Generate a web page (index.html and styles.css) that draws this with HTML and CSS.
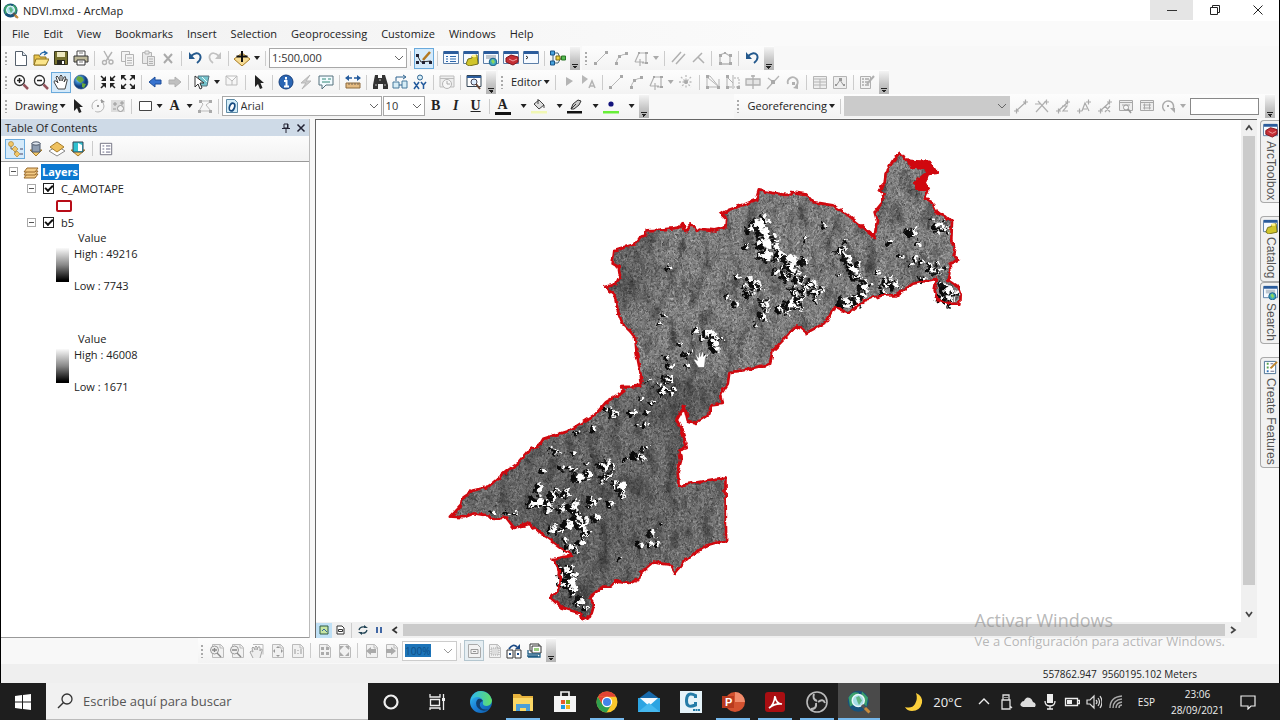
FILE: index.html
```html
<!DOCTYPE html>
<html lang="es">
<head>
<meta charset="utf-8">
<meta name="viewport" content="width=device-width, initial-scale=1">
<title>NDVI.mxd - ArcMap</title>
<link rel="stylesheet" href="styles.css">
</head>
<body>
<svg class="defs" aria-hidden="true">
  <defs>
    <linearGradient id="g-edge" x1="0" y1="0" x2="1" y2="1"><stop offset="0" stop-color="#36c6f4"/><stop offset=".5" stop-color="#1b7fd6"/><stop offset="1" stop-color="#0c59a4"/></linearGradient>
    <linearGradient id="g-edge2" x1="0" y1="0" x2="1" y2="0"><stop offset="0" stop-color="#2fb8ee"/><stop offset="1" stop-color="#62e066"/></linearGradient>
    <radialGradient id="g-globe" cx=".35" cy=".3"><stop offset="0" stop-color="#d8efff"/><stop offset=".5" stop-color="#3d8bd0"/><stop offset="1" stop-color="#123f80"/></radialGradient>
  </defs>
  <symbol id="app" viewBox="0 0 16 16"><circle cx="7.500" cy="7.500" r="7" fill="#17527c"/><path d="M1 5q3-5 7-3l-2 3-2 5-2 1zM10 1l4 4-1 6-4-4z" fill="#3ca06c"/><circle cx="7.500" cy="7" r="4" fill="#a5dbe8" stroke="#eaf8fb"/><path d="M6 5l2-1 2 3-2 3-1-2z" fill="#5fb583"/><path d="M10 10l4 4.500" stroke="#555" stroke-width="2"/><path d="M12 12l3 3" stroke="#c98c3c" stroke-width="2"/></symbol>
  <symbol id="new" viewBox="0 0 16 16"><path d="M2.500 1.500h7l4 4v10h-11z" fill="#fff" stroke="#55606c"/><path d="M9.500 1.500v4h4" fill="#dfe6ee" stroke="#55606c"/></symbol>
  <symbol id="open" viewBox="0 0 16 16"><path d="M1 5h5l1 2h6v8H1z" fill="#e9c44c" stroke="#8f7420"/><path d="M3 9h13l-3 6H1z" fill="#fbe58a" stroke="#8f7420"/><path d="M7 5q2-4 6-2M11 1l3 2-3 2" fill="none" stroke="#276aa8" stroke-width="1.300"/></symbol>
  <symbol id="save" viewBox="0 0 16 16"><path d="M1.500 1.500h13v13h-13z" fill="#77722f" stroke="#38371c"/><path d="M4 2h8v5H4z" fill="#eee9c0"/><path d="M4 10h8v5H4z" fill="#282820"/><path d="M9 11h2v3H9z" fill="#fff"/></symbol>
  <symbol id="print" viewBox="0 0 16 16"><path d="M4 6V1h8v5" fill="#fff" stroke="#444"/><path d="M1 6h14v6H1z" fill="#bdb89a" stroke="#333"/><path d="M4 10h8v5H4z" fill="#fff" stroke="#333"/><path d="M6 3h4M6 12h4" stroke="#777"/></symbol>
  <symbol id="cut" viewBox="0 0 16 16"><g fill="none" stroke="#b3b3b3" stroke-width="1.400"><path d="M4 1l5 9M12 2L6 11"/><circle cx="4.500" cy="12.500" r="2"/><circle cx="11" cy="12" r="2"/></g></symbol>
  <symbol id="copy" viewBox="0 0 16 16"><g fill="#f4f4f4" stroke="#b3b3b3"><path d="M1.500 1.500h8v10h-8z"/><path d="M5.500 4.500h8v11h-8z"/><path d="M7 8h5M7 10.500h5M7 13h5"/></g></symbol>
  <symbol id="paste" viewBox="0 0 16 16"><g fill="#e9e9e9" stroke="#b3b3b3"><path d="M2.500 2.500h9v11h-9z"/><path d="M5 1h4v3H5z"/><path d="M7.500 6.500h7v9h-7z"/><path d="M9 9h4M9 11.500h4M9 13.500h4"/></g></symbol>
  <symbol id="del" viewBox="0 0 16 16"><path d="M4 4l8 9M12 4l-8 9" stroke="#aaa" stroke-width="2"/></symbol>
  <symbol id="undo" viewBox="0 0 16 16"><path d="M4 6q6-5 9-1 2 4-3 8" fill="none" stroke="#24598d" stroke-width="1.900"/><path d="M2 2v7h6z" fill="#24598d"/></symbol>
  <symbol id="redo" viewBox="0 0 16 16"><path d="M12 6q-6-5-9-1-2 4 3 8" fill="none" stroke="#c2c2c2" stroke-width="1.700"/><path d="M14 2v7H8z" fill="#c2c2c2"/></symbol>
  <symbol id="add" viewBox="0 0 16 16"><path d="M8 3l8 6-8 7-8-7z" fill="#f7dc94" stroke="#a77b22"/><path d="M8 1v11M2.500 6.500h11" stroke="#111" stroke-width="2"/></symbol>
  <symbol id="edit" viewBox="0 0 16 16"><path d="M1 5l4 7 10-1" fill="none" stroke="#333"/><path d="M0 4h3v3H0zM0 11h3v3H0zM6 11h3v3H6zM13 11h3v3h-3z" fill="#223"/><path d="M7 10l7-8" stroke="#b37820" stroke-width="2.500"/></symbol>
  <symbol id="win" viewBox="0 0 16 16"><path d="M.5 1.500h15v12H.5z" fill="#f6faff" stroke="#5c7fa8"/><path d="M1 1h14v3H1z" fill="#2b5c9c"/></symbol>
  <symbol id="toc" viewBox="0 0 16 16"><use href="#win"/><path d="M3 6.500h2M3 9h2M3 11.500h2M7 6.500h6M7 9h6M7 11.500h6" stroke="#2d68ad"/></symbol>
  <symbol id="cat" viewBox="0 0 16 16"><use href="#win"/><path d="M5 9l4-1V6l5-1 1 9-9 2-3-2z" fill="#d0c52b" stroke="#77721a"/><ellipse cx="11" cy="6" rx="2.500" ry="1.300" fill="#fff28a"/></symbol>
  <symbol id="sea" viewBox="0 0 16 16"><use href="#win"/><path d="M3 5h10v4H3z" fill="#bdc6cf"/><circle cx="10" cy="12" r="3.800" fill="#3fa6bd" stroke="#1d628c"/><path d="M8 11l2-2 2 3-2 2z" fill="#8bd75c"/></symbol>
  <symbol id="tbx" viewBox="0 0 16 16"><use href="#win"/><path d="M3 8l5-3 7 2v5l-5 3-7-3z" fill="#c52e35" stroke="#80151c"/><path d="M6 9l4 2 4-2" fill="none" stroke="#f0a0a0"/></symbol>
  <symbol id="py" viewBox="0 0 16 16"><use href="#win"/><path d="M3 6l2 1.500L3 9" fill="none" stroke="#222"/></symbol>
  <symbol id="mb" viewBox="0 0 16 16"><path d="M3 4v9M5 3h3l2 5M4 13h4l3-5" fill="none" stroke="#467"/><path d="M.5 1h4v4h-4zM.5 11h4v4h-4z" fill="#47a1dc" stroke="#1b5688"/><path d="M6 6h4v4H6z" fill="#ecd33e" stroke="#7c6b10"/><path d="M11.500 6h4v4h-4z" fill="#57bb51" stroke="#297424"/></symbol>
  <symbol id="line" viewBox="0 0 16 16"><path d="M3 13L13 3" stroke="#b8b8b8"/><path d="M1 12h3v3H1zM12 1h3v3h-3z" fill="#a8a8a8"/></symbol>
  <symbol id="arc" viewBox="0 0 16 16"><path d="M3 14q1-9 10-10" fill="none" stroke="#b8b8b8"/><path d="M2 12h3v3H2zM5 5h3v3H5zM12 2h3v3h-3z" fill="#a8a8a8"/></symbol>
  <symbol id="trace" viewBox="0 0 16 16"><path d="M2 12l4-9h7v10H9M2 12h4M7 9v7M4 12h7" fill="none" stroke="#b0b0b0" stroke-width="1.200"/><path d="M5 2h2v2H5zM12 2h3v2h-3zM12 12h3v2h-3z" fill="#a6a6a6"/></symbol>
  <symbol id="par" viewBox="0 0 16 16"><path d="M2 12L11 2M6 14L15 4" stroke="#b0b0b0" stroke-width="1.500"/></symbol>
  <symbol id="perp" viewBox="0 0 16 16"><path d="M3 12L12 3M8 7l6 6" stroke="#b0b0b0" stroke-width="1.500"/></symbol>
  <symbol id="poly" viewBox="0 0 16 16"><path d="M3 5l5-2 5 3v8H3z" fill="none" stroke="#b5b5b5" stroke-width="1.300"/><path d="M2 4h3v3H2zM7 2h2v2H7zM12 4h3v3h-3zM12 12h3v3h-3zM2 12h3v3H2z" fill="#a9a9a9"/></symbol>
  <symbol id="zin" viewBox="0 0 16 16"><circle cx="6.500" cy="6.500" r="5" fill="#fff" stroke="#333" stroke-width="1.300"/><path d="M4 6.500h5M6.500 4v5" stroke="#222" stroke-width="1.500"/><path d="M10.500 10.500l4.500 4.500" stroke="#94535b" stroke-width="2.500"/></symbol>
  <symbol id="zout" viewBox="0 0 16 16"><circle cx="6.500" cy="6.500" r="5" fill="#fff" stroke="#333" stroke-width="1.300"/><path d="M4 6.500h5" stroke="#222" stroke-width="1.500"/><path d="M10.500 10.500l4.500 4.500" stroke="#94535b" stroke-width="2.500"/></symbol>
  <symbol id="hand" viewBox="0 0 16 16"><path d="M5 15L1 8q0-2 2-1l2 2L3 3q1-2 2 0l2 4V2q1-2 2 0v5l2-4q2-1 1.500 1L11 8l2-3q2 0 1 2l-2 8z" fill="#fff" stroke="#444"/></symbol>
  <symbol id="globe" viewBox="0 0 16 16"><circle cx="8" cy="8" r="7" fill="url(#g-globe)" stroke="#1c477c" stroke-width=".6"/><path d="M5 2l4 1 2 3-3 3-2-1-3-3zM9 9l4 1-2 4-2-1z" fill="#69a93e"/></symbol>
  <symbol id="fin" viewBox="0 0 16 16"><g stroke="#222" stroke-width="1.500"><path d="M1 2l4 4M15 2l-4 4M1 14l4-4M15 14l-4-4"/></g><path d="M6 2v5H1zM10 2v5h5zM6 14V9H1zM10 14V9h5z" fill="#222"/></symbol>
  <symbol id="fout" viewBox="0 0 16 16"><g stroke="#222" stroke-width="1.500"><path d="M2 2l4 4M14 2l-4 4M2 14l4-4M14 14l-4-4"/></g><path d="M1 1h5L1 6zM15 1h-5l5 5zM1 15h5l-5-5zM15 15h-5l5-5z" fill="#222"/></symbol>
  <symbol id="left" viewBox="0 0 16 16"><path d="M2 8l6-5v3h6v4H8v3z" fill="#3773cf" stroke="#1d4d98"/></symbol>
  <symbol id="right" viewBox="0 0 16 16"><path d="M14 8L8 3v3H2v4h6v3z" fill="#c0c0c0" stroke="#b0b0b0"/></symbol>
  <symbol id="self" viewBox="0 0 16 16"><path d="M4 2h11l-2 10H6z" fill="#74c3cc" stroke="#54707c"/><path d="M8 3l5 5" stroke="#e9f9fa"/><path d="M1 2v11l3-3 2 5 2-1-2-5h4z" fill="#fff" stroke="#333"/></symbol>
  <symbol id="clr" viewBox="0 0 16 16"><path d="M2 2h11v9H2zM2 2l6 5 5-5M8 7v4" fill="#f6f6f6" stroke="#bbb"/></symbol>
  <symbol id="ptr" viewBox="0 0 16 16"><path d="M4 1v12l3-3 2 5 2.500-1-2-5H13z" fill="#222"/></symbol>
  <symbol id="info" viewBox="0 0 16 16"><circle cx="8" cy="8" r="7" fill="#2a66b4" stroke="#173f7c"/><path d="M8 3v2.500M6 7h2.500v5M6 12.500h5" stroke="#fff" stroke-width="2" fill="none"/></symbol>
  <symbol id="bolt" viewBox="0 0 16 16"><path d="M12 1L3 9h5l-4 6 9-8H8z" fill="#ccc" stroke="#b7b7b7"/></symbol>
  <symbol id="html" viewBox="0 0 16 16"><path d="M1 2h14v9H8l-4 4v-4H1z" fill="#f2fbff" stroke="#54707c"/><path d="M4 5h4M4 8h8M10 5h3" stroke="#387"/></symbol>
  <symbol id="meas" viewBox="0 0 16 16"><path d="M1 9h14v5H1z" fill="#e4bb82" stroke="#8d6a3c"/><path d="M4 9v2M7 9v2M10 9v2M13 9v2" stroke="#765"/><path d="M3 4h4M9 4h4" stroke="#245b9d" stroke-width="1.500"/><path d="M4 1v6L0 4zM12 1v6l4-3z" fill="#245b9d"/></symbol>
  <symbol id="bino" viewBox="0 0 16 16"><path d="M3 1h3v3h4V1h3l3 10v4h-5v-5H6v5H1v-4z" fill="#333"/><path d="M3 11h2M12 11h2M7 6h2" stroke="#bbb"/></symbol>
  <symbol id="route" viewBox="0 0 16 16"><path d="M1 8h6v6H1zM10 7h5v7h-5z" fill="#d7edf6" stroke="#47789b"/><path d="M4 7V3h9M11 1l3 2-3 2M7 11h3" fill="none" stroke="#2d6390"/></symbol>
  <symbol id="xy" viewBox="0 0 16 16"><circle cx="8" cy="3.500" r="2.500" fill="#d7edf6" stroke="#2d6390"/><path d="M2 8l5 7M7 8l-5 7M9 8l2.500 3L14 8M11.500 11v4" fill="none" stroke="#245b9d" stroke-width="1.500"/></symbol>
  <symbol id="time" viewBox="0 0 16 16"><path d="M1 2h14v11H1zM1 4.500h14" fill="#eee" stroke="#bdbdbd"/><circle cx="8" cy="10" r="4.500" fill="#f7f7f7" stroke="#b5b5b5"/><path d="M8 7v3h3" stroke="#aaa" fill="none"/></symbol>
  <symbol id="view" viewBox="0 0 16 16"><path d="M1 1.500h14v11H1z" fill="#fff" stroke="#345"/><path d="M1 3h14" stroke="#2b5c9c" stroke-width="2"/><circle cx="8" cy="8" r="3" fill="#def" stroke="#445"/><path d="M10 10l4 5" stroke="#643" stroke-width="2"/></symbol>
  <symbol id="gview" viewBox="0 0 16 16"><path d="M1.500 2.500h13v10h-13zM2 4.500h12" fill="#eee" stroke="#a8a8a8"/><path d="M4 7h8" stroke="#aaa"/><circle cx="8" cy="9.500" r="2.500" fill="#f7f7f7" stroke="#999"/><path d="M10 11l3 4" stroke="#999" stroke-width="1.500"/></symbol>
  <symbol id="glink" viewBox="0 0 16 16"><path d="M1.500 2.500h13v10h-13zM2 4.500h12" fill="#eee" stroke="#a8a8a8"/><path d="M4 7h8M4 10h8M5.500 5.500v6M10.500 5.500v6" stroke="#aaa"/></symbol>
  <symbol id="gptr" viewBox="0 0 16 16"><path d="M5 3v9l7-5z" fill="#b4b4b4"/></symbol>
  <symbol id="aptr" viewBox="0 0 16 16"><path d="M1 1v9l6-5z" fill="#b8b8b8"/><path d="M8 14l3-7 3 7M9 12h4" stroke="#b4b4b4" stroke-width="1.500" fill="none"/></symbol>
  <symbol id="burst" viewBox="0 0 16 16"><path d="M8 1v14M1 8h14M3 3l10 10M13 3L3 13" stroke="#bbb" stroke-dasharray="2 1.500" stroke-width="1.300"/><circle cx="8" cy="8" r="2" fill="#aaa"/></symbol>
  <symbol id="cutp" viewBox="0 0 16 16"><path d="M2 2h3l9 11v-8M2 2v11h12M2 3l12 10" fill="none" stroke="#b5b5b5"/><path d="M1 1h3v3H1zM1 12h3v3H1zM12 12h3v3h-3z" fill="#a9a9a9"/></symbol>
  <symbol id="split" viewBox="0 0 16 16"><path d="M2 2v11h5M2 3l6 6M8 1v14" fill="none" stroke="#b0b0b0"/><path d="M9 4h5v9H9" fill="none" stroke="#b0b0b0" stroke-dasharray="2 1"/><path d="M1 1h3v3H1zM1 12h3v3H1zM12 12h3v3h-3z" fill="#aaa"/></symbol>
  <symbol id="cross" viewBox="0 0 16 16"><path d="M1 5h14v6H1zM8 1v14M6 2h4" fill="#e4e4e4" stroke="#b0b0b0" stroke-width="1.300"/></symbol>
  <symbol id="slash" viewBox="0 0 16 16"><path d="M2 15L14 2M3 4l4 3" stroke="#b5b5b5" stroke-width="1.300"/><path d="M6 6h4v4H6z" fill="#aaa"/></symbol>
  <symbol id="rot" viewBox="0 0 16 16"><path d="M3 10A5 5 0 1 1 11 12" fill="none" stroke="#b5b5b5" stroke-width="2"/><path d="M7 8h3v3H7zM8 14l5-4v5z" fill="#b0b0b0"/></symbol>
  <symbol id="table" viewBox="0 0 16 16"><path d="M1.500 2.500h13v12h-13zM2 5h12M2 8h12M2 11h12M8 5v9" fill="#eee" stroke="#b5b5b5"/></symbol>
  <symbol id="sketch" viewBox="0 0 16 16"><path d="M1.500 2.500h13v12h-13z" fill="#eee" stroke="#b5b5b5"/><path d="M4 12l4-6 4 6" fill="none" stroke="#999"/><path d="M7 4h3v3H7zM3 10h2v2H3zM11 10h2v2h-2z" fill="#999"/></symbol>
  <symbol id="create" viewBox="0 0 16 16"><path d="M1.500 2.500h10v12h-10z" fill="#f2f2f2" stroke="#b0b0b0"/><path d="M3 5h2M3 8h2M3 11h2M6 5h4M6 8h3M6 11h4" stroke="#aaa" stroke-width="1.400"/><path d="M8 10l7-8" stroke="#b0b0b0" stroke-width="2"/></symbol>
  <symbol id="createc" viewBox="0 0 16 16"><path d="M1.500 1.500h12v13h-12z" fill="#fff" stroke="#4a7194"/><path d="M4 4h2M4 8h2" stroke="#57a34b" stroke-width="2"/><path d="M4 12h2" stroke="#2d6fb8" stroke-width="2"/><path d="M8 4h3M8 8h2M8 12h4" stroke="#668"/><path d="M8 9l7-7" stroke="#be8630" stroke-width="2"/></symbol>
  <symbol id="rotc" viewBox="0 0 16 16"><circle cx="8" cy="8" r="6" fill="none" stroke="#b5b5b5" stroke-dasharray="12 3"/><path d="M7 7h2v2H7zM11 1l4 3-4 1z" fill="#999"/></symbol>
  <symbol id="zsel" viewBox="0 0 16 16"><path d="M1 2h14v12H1z" fill="#ddd"/><path d="M3 6h4M5 4v4M3 11h3M10 5h4M12 3v4" stroke="#999"/><circle cx="10.500" cy="10.500" r="3" fill="#f3f3f3" stroke="#999"/></symbol>
  <symbol id="rect" viewBox="0 0 16 16"><path d="M2.500 3.500h12v9h-12z" fill="#fff" stroke="#444"/></symbol>
  <symbol id="verts" viewBox="0 0 16 16"><path d="M2 13l4-7-3-3h11l-5 4 5 6z" fill="none" stroke="#bbb"/><path d="M1 12h3v3H1zM2 2h3v3H2zM12 2h3v3h-3zM12 12h3v3h-3z" fill="#aaa"/></symbol>
  <symbol id="bucket" viewBox="0 0 16 16"><path d="M3 6l5-4 5 5-5 4z" fill="#ddd" stroke="#444"/><path d="M7 6V1M13 7v3" stroke="#444"/><path d="M0 13h16v2.500H0z" fill="#f1f7b4"/></symbol>
  <symbol id="pen" viewBox="0 0 16 16"><path d="M4 11l2-5 5-4 3 1-2 4-5 4z" fill="#ccc" stroke="#333"/><path d="M4 11l5-5" stroke="#333"/><path d="M0 13h15v2.500H0z" fill="#111"/></symbol>
  <symbol id="dot" viewBox="0 0 16 16"><circle cx="8" cy="6" r="2.600" fill="#13137c"/><path d="M0 13h16v2.500H0z" fill="#68ee38"/></symbol>
  <symbol id="gr1" viewBox="0 0 16 16"><path d="M3 13L13 4M1 13h5M3.500 10.500v5M10 4h5M12.500 1.500v5" stroke="#aaa" stroke-width="1.200"/></symbol>
  <symbol id="gr2" viewBox="0 0 16 16"><path d="M2 14L12 3M4 3l10 11M1 6h5M10 4h5M12.500 1.500v5" stroke="#b0b0b0" stroke-width="1.200"/></symbol>
  <symbol id="gr3" viewBox="0 0 16 16"><path d="M3 13L13 4M1 13h5M3.500 10.500v5M10 4h5M12.500 1.500v5M7 8h5l-4 5h5" stroke="#aaa" stroke-width="1.200" fill="none"/></symbol>
  <symbol id="gr4" viewBox="0 0 16 16"><path d="M1 13h5M3.500 10.500v5M10 4h5M12.500 1.500v5M6 13l3-8 4 8M7 11h4" stroke="#aaa" stroke-width="1.200" fill="none"/></symbol>
  <symbol id="gr5" viewBox="0 0 16 16"><path d="M3 13L13 4M1 13h5M3.500 10.500v5M10 4h5M12.500 1.500v5M8 8l5 6M13 8l-5 6" stroke="#aaa" stroke-width="1.200" fill="none"/></symbol>
  <symbol id="rota" viewBox="0 0 16 16"><path d="M5 13A5.500 5.500 0 1 1 13 11" fill="none" stroke="#aaa" stroke-width="1.500"/><path d="M10 10h5v5zM7 7h2v2H7z" fill="#aaa"/></symbol>
  <symbol id="order" viewBox="0 0 16 16"><path d="M4 5v3h4M8 8v5h3" fill="none" stroke="#666"/><circle cx="4" cy="3" r="2.500" fill="#f1c769" stroke="#a57c2c" stroke-width=".6"/><path d="M8 5l3 3-3 3-3-3zM10 10l3 3-3 3-3-3z" fill="#f1c769" stroke="#a57c2c" stroke-width=".6"/><path d="M13 8h3M13 13h3" stroke="#446"/></symbol>
  <symbol id="src" viewBox="0 0 16 16"><path d="M2 9l6 6 6-6z" fill="#f1c769" stroke="#a57c2c"/><path d="M4 2h8v9H4z" fill="#8e9db1" stroke="#4a5668"/><ellipse cx="8" cy="2.500" rx="4" ry="1.700" fill="#dfe6ef" stroke="#4a5668"/></symbol>
  <symbol id="vis" viewBox="0 0 16 16"><path d="M8 5l8 5-8 5-8-5z" fill="#fff" stroke="#888"/><path d="M8 1l7 5-7 5-7-5z" fill="#efc15e" stroke="#a57c2c"/></symbol>
  <symbol id="bysel" viewBox="0 0 16 16"><path d="M1 9l7 6 7-6z" fill="#f1c769" stroke="#a57c2c"/><path d="M3 1h10v10H3z" fill="#30c0cf" stroke="#345"/><path d="M8 2l4 2v6H8z" fill="#fff"/></symbol>
  <symbol id="opts" viewBox="0 0 16 16"><path d="M1.500 1.500h13v13h-13z" fill="#fff" stroke="#667"/><path d="M4 4.500h2M4 8h2M4 11.500h2M8 4.500h5M8 8h5M8 11.500h5" stroke="#557"/></symbol>
  <symbol id="stack" viewBox="0 0 16 16"><g fill="#f4cb85" stroke="#98692a"><path d="M1 14l3-4h11l-3 4z"/><path d="M1 11l3-4h11l-3 4z"/><path d="M1 8l3-4h11l-3 4z"/></g></symbol>
  <symbol id="pg" viewBox="0 0 16 16"><path d="M3.500 1.500h8l3 3v10h-11z" fill="#f1f1f1" stroke="#bbb"/><path d="M11 1v4h3" fill="none" stroke="#bbb"/></symbol>
  <symbol id="pzin" viewBox="0 0 16 16"><use href="#pg"/><circle cx="5.500" cy="7" r="4" fill="#eee" stroke="#999"/><path d="M3 7h5M5.500 5v4M8 10l4 4" stroke="#888" stroke-width="1.400"/></symbol>
  <symbol id="pzout" viewBox="0 0 16 16"><use href="#pg"/><circle cx="5.500" cy="7" r="4" fill="#eee" stroke="#999"/><path d="M3 7h5M8 10l4 4" stroke="#888" stroke-width="1.400"/></symbol>
  <symbol id="phand" viewBox="0 0 16 16"><path d="M4 1.500h10v10" fill="none" stroke="#bbb"/><path d="M4 15L1 9q1-2 3 0L3 5q1-2 2 0l1 2V4q1-2 2 0v3l1-3q2-1 2 1v3l1-2q2 0 1 2l-2 7" fill="#eee" stroke="#a5a5a5"/></symbol>
  <symbol id="pfit" viewBox="0 0 16 16"><use href="#pg"/><path d="M9 3l2 2H7zM9 14l2-2H7zM4 8l2-2v4zM14 8l-2-2v4z" fill="#999"/></symbol>
  <symbol id="p11" viewBox="0 0 16 16"><use href="#pg"/><path d="M6 6v5M12 6v5M9 7v1M9 10v1" stroke="#999"/></symbol>
  <symbol id="pf" viewBox="0 0 16 16"><use href="#pg"/><path d="M5 4h3v3H5zM10 4h3v3h-3zM5 9h3v3H5zM10 9h3v3h-3z" fill="#aaa"/></symbol>
  <symbol id="pfo" viewBox="0 0 16 16"><use href="#pg"/><path d="M4 3h4L4 7zM13 3v4L9 3zM4 13h4L4 9zM13 13V9l-4 4z" fill="#aaa"/></symbol>
  <symbol id="pl" viewBox="0 0 16 16"><use href="#pg"/><path d="M3 8l5-4v2h5v4H8v2z" fill="#aaa"/></symbol>
  <symbol id="pr" viewBox="0 0 16 16"><use href="#pg"/><path d="M13 8L8 4v2H3v4h5v2z" fill="#aaa"/></symbol>
  <symbol id="draft" viewBox="0 0 16 16"><path d="M2.500 1.500h9l3 3v10h-12z" fill="#f2f2f2" stroke="#aaa"/><path d="M5 6.500h7v4H5zM7 8.500h3" fill="none" stroke="#999"/></symbol>
  <symbol id="focus" viewBox="0 0 16 16"><use href="#pg"/><path d="M5 5h8v7H5z" fill="#ddd" stroke="#aaa" stroke-dasharray="1 1"/></symbol>
  <symbol id="chg" viewBox="0 0 16 16"><path d="M1 7h6v8H1zM9 7h6v8H9z" fill="#fff" stroke="#333"/><path d="M3 6q4-6 8-2" fill="none" stroke="#1b4a85" stroke-width="1.800"/><path d="M9 6h5V1zM3 10h2v2H3zM11 10h2v2h-2z" fill="#1b4a85"/></symbol>
  <symbol id="ddp" viewBox="0 0 16 16"><path d="M4 1h9v7H4z" fill="#fff" stroke="#333"/><path d="M6 3h9v7H6z" fill="#fff" stroke="#333"/><path d="M8 5h5v3H8z" fill="#9bcf83"/><path d="M1 13h11M2 7v4h12v3H2" fill="none" stroke="#1f5d85" stroke-width="1.300"/></symbol>
  <symbol id="font" viewBox="0 0 16 16"><path d="M2.500 1.500h8l3 3v10h-11z" fill="#d4edf8" stroke="#5e8ba6"/><ellipse cx="8" cy="9" rx="2.500" ry="4" transform="rotate(20 8 9)" fill="#fff" stroke="#174b80" stroke-width="1.700"/></symbol>
</svg>

<div class="window">
  <header class="titlebar">
    <svg class="ic"><use href="#app"/></svg>
    <h1>NDVI.mxd - ArcMap</h1>
    <div class="winctl">
      <button class="hot" aria-label="Minimize"><svg viewBox="0 0 12 12"><path d="M1 6.500h10" stroke="#333"/></svg></button>
      <button aria-label="Restore"><svg viewBox="0 0 12 12"><path d="M1.500 3.500h7v7h-7zM3.500 3.500v-2h7v7h-2" fill="none" stroke="#222"/></svg></button>
      <button aria-label="Close"><svg viewBox="0 0 12 12"><path d="M1.500 1.500l9 9M10.500 1.500l-9 9" stroke="#222"/></svg></button>
    </div>
  </header>
  <nav class="menu">
    <button>File</button><button>Edit</button><button>View</button><button>Bookmarks</button><button>Insert</button><button>Selection</button><button>Geoprocessing</button><button>Customize</button><button>Windows</button><button>Help</button>
  </nav>

  <div class="bars">
    <div class="row">
      <div class="tb">
        <i class="grip"></i>
        <button aria-label="New"><svg class="ic"><use href="#new"/></svg></button><button aria-label="Open"><svg class="ic"><use href="#open"/></svg></button><button aria-label="Save"><svg class="ic"><use href="#save"/></svg></button><button aria-label="Print"><svg class="ic"><use href="#print"/></svg></button>
        <i class="sep"></i>
        <button aria-label="Cut"><svg class="ic"><use href="#cut"/></svg></button><button aria-label="Copy"><svg class="ic"><use href="#copy"/></svg></button><button aria-label="Paste"><svg class="ic"><use href="#paste"/></svg></button><button aria-label="Delete"><svg class="ic"><use href="#del"/></svg></button>
        <i class="sep"></i>
        <button aria-label="Undo"><svg class="ic"><use href="#undo"/></svg></button><button aria-label="Redo"><svg class="ic"><use href="#redo"/></svg></button>
        <i class="sep"></i>
        <button aria-label="Add Data"><svg class="ic"><use href="#add"/></svg></button><i class="dd"></i>
        <i class="sep"></i>
        <select class="combo scale" aria-label="Map scale"><option>1:500,000</option></select>
        <i class="sep"></i>
        <button class="on" aria-label="Editor Toolbar"><svg class="ic"><use href="#edit"/></svg></button>
        <i class="sep"></i>
        <button aria-label="Table Of Contents"><svg class="ic"><use href="#toc"/></svg></button><button aria-label="Catalog"><svg class="ic"><use href="#cat"/></svg></button><button aria-label="Search"><svg class="ic"><use href="#sea"/></svg></button><button aria-label="ArcToolbox"><svg class="ic"><use href="#tbx"/></svg></button><button aria-label="Python"><svg class="ic"><use href="#py"/></svg></button>
        <i class="sep"></i>
        <button aria-label="ModelBuilder"><svg class="ic"><use href="#mb"/></svg></button>
        <button class="more" aria-label="Toolbar Options"></button>
      </div>
      <div class="tb">
        <i class="grip"></i>
        <button aria-label="Straight"><svg class="ic"><use href="#line"/></svg></button><button aria-label="Arc"><svg class="ic"><use href="#arc"/></svg></button><button aria-label="Trace"><svg class="ic"><use href="#trace"/></svg></button><i class="dd off"></i>
        <i class="sep"></i>
        <button aria-label="Parallel"><svg class="ic"><use href="#par"/></svg></button><button aria-label="Perpendicular"><svg class="ic"><use href="#perp"/></svg></button>
        <i class="sep"></i>
        <button aria-label="Finish"><svg class="ic"><use href="#poly"/></svg></button>
        <i class="sep"></i>
        <button aria-label="Undo"><svg class="ic"><use href="#undo"/></svg></button>
        <button class="more" aria-label="Toolbar Options"></button>
      </div>
    </div>

    <div class="row">
      <div class="tb">
        <i class="grip"></i>
        <button aria-label="Zoom In"><svg class="ic"><use href="#zin"/></svg></button><button aria-label="Zoom Out"><svg class="ic"><use href="#zout"/></svg></button><button class="on" aria-label="Pan"><svg class="ic"><use href="#hand"/></svg></button><button aria-label="Full Extent"><svg class="ic"><use href="#globe"/></svg></button>
        <i class="sep"></i>
        <button aria-label="Fixed Zoom In"><svg class="ic"><use href="#fin"/></svg></button><button aria-label="Fixed Zoom Out"><svg class="ic"><use href="#fout"/></svg></button>
        <i class="sep"></i>
        <button aria-label="Back"><svg class="ic"><use href="#left"/></svg></button><button aria-label="Forward"><svg class="ic"><use href="#right"/></svg></button>
        <i class="sep"></i>
        <button aria-label="Select Features"><svg class="ic"><use href="#self"/></svg></button><i class="dd"></i><button aria-label="Clear Selection"><svg class="ic"><use href="#clr"/></svg></button>
        <i class="sep"></i>
        <button aria-label="Select Elements"><svg class="ic"><use href="#ptr"/></svg></button>
        <i class="sep"></i>
        <button aria-label="Identify"><svg class="ic"><use href="#info"/></svg></button><button aria-label="Hyperlink"><svg class="ic"><use href="#bolt"/></svg></button><button aria-label="HTML Popup"><svg class="ic"><use href="#html"/></svg></button>
        <i class="sep"></i>
        <button aria-label="Measure"><svg class="ic"><use href="#meas"/></svg></button>
        <i class="sep"></i>
        <button aria-label="Find"><svg class="ic"><use href="#bino"/></svg></button><button aria-label="Find Route"><svg class="ic"><use href="#route"/></svg></button><button aria-label="Go To XY"><svg class="ic"><use href="#xy"/></svg></button>
        <i class="sep"></i>
        <button aria-label="Time Slider"><svg class="ic"><use href="#time"/></svg></button>
        <i class="sep"></i>
        <button aria-label="Viewer Window"><svg class="ic"><use href="#view"/></svg></button>
        <button class="more" aria-label="Toolbar Options"></button>
      </div>
      <div class="tb">
        <i class="grip"></i>
        <button class="txt">Editor<i class="dd"></i></button>
        <i class="sep"></i>
        <button aria-label="Edit Tool"><svg class="ic"><use href="#gptr"/></svg></button><button aria-label="Annotation"><svg class="ic"><use href="#aptr"/></svg></button>
        <i class="sep"></i>
        <button aria-label="Straight"><svg class="ic"><use href="#line"/></svg></button><button aria-label="Arc"><svg class="ic"><use href="#arc"/></svg></button><button aria-label="Trace"><svg class="ic"><use href="#trace"/></svg></button><i class="dd off"></i><button aria-label="Point"><svg class="ic"><use href="#burst"/></svg></button>
        <i class="sep"></i>
        <button aria-label="Edit Vertices"><svg class="ic"><use href="#cutp"/></svg></button><button aria-label="Reshape"><svg class="ic"><use href="#split"/></svg></button><button aria-label="Cut Polygons"><svg class="ic"><use href="#cross"/></svg></button><button aria-label="Split"><svg class="ic"><use href="#slash"/></svg></button><button aria-label="Rotate"><svg class="ic"><use href="#rot"/></svg></button>
        <i class="sep"></i>
        <button aria-label="Attributes"><svg class="ic"><use href="#table"/></svg></button><button aria-label="Sketch Properties"><svg class="ic"><use href="#sketch"/></svg></button>
        <i class="sep"></i>
        <button aria-label="Create Features"><svg class="ic"><use href="#create"/></svg></button>
        <button class="more" aria-label="Toolbar Options"></button>
      </div>
    </div>

    <div class="row">
      <div class="tb">
        <i class="grip"></i>
        <button class="txt">Drawing<i class="dd"></i></button>
        <button aria-label="Select"><svg class="ic"><use href="#ptr"/></svg></button><button aria-label="Rotate"><svg class="ic"><use href="#rotc"/></svg></button><button aria-label="Zoom to Selected"><svg class="ic"><use href="#zsel"/></svg></button>
        <i class="sep"></i>
        <button aria-label="Rectangle"><svg class="ic"><use href="#rect"/></svg></button><i class="dd"></i>
        <button class="serif">A</button><i class="dd"></i>
        <button aria-label="Edit Vertices"><svg class="ic"><use href="#verts"/></svg></button>
        <i class="sep"></i>
        <span class="fontbox"><svg class="ic"><use href="#font"/></svg><select class="combo" aria-label="Font"><option>Arial</option></select></span>
        <select class="combo size" aria-label="Font size"><option>10</option></select>
        <button class="serif">B</button><button class="serif it">I</button><button class="serif un">U</button>
        <i class="sep"></i>
        <span class="pair"><button class="serif colour">A</button><i class="dd"></i></span>
        <span class="pair"><button aria-label="Fill Color"><svg class="ic"><use href="#bucket"/></svg></button><i class="dd"></i></span>
        <span class="pair"><button aria-label="Line Color"><svg class="ic"><use href="#pen"/></svg></button><i class="dd"></i></span>
        <span class="pair"><button aria-label="Marker Color"><svg class="ic"><use href="#dot"/></svg></button><i class="dd"></i></span>
        <button class="more" aria-label="Toolbar Options"></button>
      </div>
      <div class="tb end">
        <i class="grip"></i>
        <button class="txt">Georeferencing<i class="dd"></i></button>
        <i class="sep"></i>
        <select class="combo layer" aria-label="Georeferenced layer" disabled><option></option></select>
        <button aria-label="Add Control Points"><svg class="ic"><use href="#gr1"/></svg></button><button aria-label="Auto Registration"><svg class="ic"><use href="#gr2"/></svg></button><button aria-label="Select Link"><svg class="ic"><use href="#gr3"/></svg></button><button aria-label="Zoom To Link"><svg class="ic"><use href="#gr4"/></svg></button><button aria-label="Delete Link"><svg class="ic"><use href="#gr5"/></svg></button><button aria-label="Viewer"><svg class="ic"><use href="#gview"/></svg></button><button aria-label="Link Table"><svg class="ic"><use href="#glink"/></svg></button><button aria-label="Rotate"><svg class="ic"><use href="#rota"/></svg></button><i class="dd off"></i>
        <input class="angle" type="text" aria-label="Rotation">
        <button class="more" aria-label="Toolbar Options"></button>
      </div>
    </div>
  </div>

  <main class="work">
    <section class="toc">
      <div class="tochead"><h2>Table Of Contents</h2>
        <button aria-label="Auto Hide"><svg viewBox="0 0 10 10"><path d="M3 1h4v4H3zM1 5.500h8M5 6v4M6.500 1v4" fill="none" stroke="#223"/></svg></button>
        <button aria-label="Close"><svg viewBox="0 0 10 10"><path d="M1.500 1.500l7 7M8.500 1.500l-7 7" stroke="#223" stroke-width="1.500"/></svg></button></div>
      <div class="toctools">
        <button class="on" aria-label="List By Drawing Order"><svg class="ic"><use href="#order"/></svg></button><button aria-label="List By Source"><svg class="ic"><use href="#src"/></svg></button><button aria-label="List By Visibility"><svg class="ic"><use href="#vis"/></svg></button><button aria-label="List By Selection"><svg class="ic"><use href="#bysel"/></svg></button><i class="sep"></i><button aria-label="Options"><svg class="ic sm"><use href="#opts"/></svg></button>
      </div>
      <div class="tree">
        <div class="node top"><i class="exp"></i><svg class="ic"><use href="#stack"/></svg><b class="picked">Layers</b></div>
        <div class="node sub"><i class="exp"></i><input type="checkbox" id="ly1" checked><label for="ly1">C_AMOTAPE</label></div>
        <div class="node sym"><i class="swatch"></i></div>
        <div class="node sub"><i class="exp"></i><input type="checkbox" id="ly2" checked><label for="ly2">b5</label></div>
        <div class="legend"><p>Value</p><i class="ramp"></i><span>High : 49216</span><span>Low : 7743</span></div>
        <div class="legend"><p>Value</p><i class="ramp"></i><span>High : 46008</span><span>Low : 1671</span></div>
      </div>
    </section>

    <section class="mapframe">
      <div class="map">
        <svg id="map" viewBox="317 120 924 501" preserveAspectRatio="xMidYMid meet" role="img" aria-label="Map of C_AMOTAPE">
          <defs>
            <filter id="terrain" x="0" y="0" width="100%" height="100%" color-interpolation-filters="sRGB">
              <feTurbulence type="fractalNoise" baseFrequency=".5 .4" numOctaves="4" seed="7"/>
              <feColorMatrix values=".5 .3 0 0 .1  .5 .3 0 0 .1  .5 .3 0 0 .1  0 0 0 0 1"/>
            </filter>
            <filter id="relief" x="0" y="0" width="100%" height="100%" color-interpolation-filters="sRGB">
              <feTurbulence type="fractalNoise" baseFrequency=".09 .04" numOctaves="4" seed="21"/>
              <feColorMatrix values="0 0 0 0 .1  0 0 0 0 .1  0 0 0 0 .1  1.3 0 0 0 -.58"/>
            </filter>
            <filter id="rough" x="-5%" y="-5%" width="110%" height="110%" color-interpolation-filters="sRGB">
              <feTurbulence type="fractalNoise" baseFrequency=".16" numOctaves="2" seed="3"/>
              <feDisplacementMap in="SourceGraphic" scale="5" xChannelSelector="R" yChannelSelector="G"/>
            </filter>
            <filter id="ragged" x="-5%" y="-5%" width="110%" height="110%" color-interpolation-filters="sRGB">
              <feTurbulence type="fractalNoise" baseFrequency=".2" numOctaves="2" seed="11"/>
              <feDisplacementMap in="SourceGraphic" scale="9" xChannelSelector="R" yChannelSelector="G"/>
            </filter>
            <radialGradient id="dark"><stop offset="0" stop-color="#111" stop-opacity=".3"/><stop offset="1" stop-color="#111" stop-opacity="0"/></radialGradient>
            <path id="outline" d="M128 735L122 690 112 640 107 590 90 570 70 550 55 510 45 460 18 440 50 432 62 405 58 380 40 370 45 330 105 312 120 290 140 285 142 270 185 268 240 262 250 248 258 272 275 252 290 275 300 265 345 270 378 262 380 235 365 222 385 210 440 190 470 178 478 150 530 160 575 165 578 155 620 162 640 185 700 195 740 220 790 260 825 290 832 240 825 215 850 185 855 160 838 150 855 130 858 100 885 55 903 35 920 60 945 65 990 65 1010 98 985 100 970 125 985 150 975 175 995 185 1010 215 1035 225 1057 245 1055 300 1065 325 1060 345 1078 357 1050 370 1052 400 1045 420 1075 440 1083 462 1082 490 1045 490 1015 480 1005 450 1012 415 940 430 890 465 850 465 795 478 745 520 705 500 680 545 620 578 592 555 560 590 520 630 512 670 470 680 430 690 390 695 385 730 365 760 370 790 335 795 330 820 290 847 265 840 255 798 231 840 245 865 255 895 262 922 240 930 245 960 235 995 238 1035 378 1010 380 1198 320 1215 260 1255 225 1298 210 1272 160 1265 125 1295 120 1315 90 1330 50 1322 35 1338 10 1338 -30 1370 -15 1390 -25 1425 -50 1438 -55 1418 -115 1400 -145 1372 -120 1345 -118 1290 -140 1255 -82 1245 -150 1195 -210 1150 -255 1162 -280 1130 -315 1138 -330 1125 -375 1118 -405 1130 -445 1128 -415 1095 -410 1070 -380 1050 -335 1040 -275 990 -240 965 -210 930 -180 915 -168 895 -90 870 -10 820 20 785 75 752 65 740 95 738Z"/>
            <clipPath id="area"><use href="#outline" transform="translate(600 140) scale(.3333)"/></clipPath>
          </defs>
          <g filter="url(#rough)">
            <g clip-path="url(#area)">
              <rect x="440" y="140" width="530" height="490" filter="url(#terrain)"/>
              <rect x="440" y="140" width="530" height="490" filter="url(#relief)"/>
              <ellipse cx="622" cy="275" rx="55" ry="60" fill="url(#dark)"/>
              <ellipse cx="680" cy="400" rx="60" ry="50" fill="url(#dark)"/>
              <ellipse cx="685" cy="440" rx="22" ry="45" fill="url(#dark)"/>
              <ellipse cx="580" cy="510" rx="240" ry="170" fill="url(#dark)"/>
              <ellipse cx="570" cy="600" rx="40" ry="35" fill="url(#dark)"/>
            </g>
          </g>
          <g id="clouds" filter="url(#ragged)"></g>
          <g filter="url(#rough)">
            <g transform="translate(600 140) scale(.3333)" fill="none" stroke="#d0080f" stroke-width="8" stroke-linejoin="round">
              <use href="#outline"/>
              <path d="M928 62L990 66 1010 96 985 102 972 120 985 148 948 148 944 128 962 112 985 96 975 84 935 82Z" fill="#d0080f"/>
            </g>
          </g>
          <path d="M699 367l-5-8q1-1 4 1l-2-6q1-1 3 3v-5q2-1 2 4l2-5q2 0 1 5l3-3q1 1-1 5l-1 9z" fill="#fff" stroke="#555" stroke-width=".6"/>
        </svg>
      </div>
      <div class="vbar"><button aria-label="Scroll up"><svg viewBox="0 0 10 10"><path d="M2 7l3-4 3 4" fill="none" stroke="#444" stroke-width="1.700"/></svg></button><i class="thumb"></i><button aria-label="Scroll down"><svg viewBox="0 0 10 10"><path d="M2 3l3 4 3-4" fill="none" stroke="#444" stroke-width="1.700"/></svg></button></div>
      <div class="hbar">
        <button class="onb" aria-label="Data View"><svg viewBox="0 0 10 10"><path d="M1 1h8v8H1z" fill="#c7e6a5" stroke="#2f5b46"/><path d="M3 6l2-2 3 3" fill="none" stroke="#369"/></svg></button>
        <button aria-label="Layout View"><svg viewBox="0 0 10 10"><path d="M2 1h5l2 2v6H2z" fill="#fff" stroke="#333"/><path d="M3.500 4.500h4v2h-4z" fill="none" stroke="#333"/></svg></button>
        <i class="sep"></i>
        <button aria-label="Refresh"><svg viewBox="0 0 10 10"><path d="M1 5q1-4 6-3M9 5q-1 4-6 3" fill="none" stroke="#245" stroke-width="1.300"/><path d="M6 0l4 3H6zM4 10L0 7h4z" fill="#245"/></svg></button>
        <button aria-label="Pause"><svg viewBox="0 0 10 10"><path d="M3 2v6M7 2v6" stroke="#4167a5" stroke-width="2"/></svg></button>
        <button aria-label="Scroll left"><svg viewBox="0 0 10 10"><path d="M7 2L3 5l4 3" fill="none" stroke="#333" stroke-width="1.700"/></svg></button>
        <i class="thumb"></i>
        <button aria-label="Scroll right"><svg viewBox="0 0 10 10"><path d="M3 2l4 3-4 3" fill="none" stroke="#444" stroke-width="1.700"/></svg></button>
      </div>
    </section>

    <aside class="dock">
      <button class="gap"><svg class="ic"><use href="#tbx"/></svg><span>ArcToolbox</span></button>
      <button><svg class="ic"><use href="#cat"/></svg><span>Catalog</span></button>
      <button class="gap"><svg class="ic"><use href="#sea"/></svg><span>Search</span></button>
      <button><svg class="ic"><use href="#createc"/></svg><span>Create Features</span></button>
    </aside>
  </main>

  <div class="layoutbar">
    <div class="tb">
      <i class="grip"></i>
      <button aria-label="Page Zoom In"><svg class="ic"><use href="#pzin"/></svg></button><button aria-label="Page Zoom Out"><svg class="ic"><use href="#pzout"/></svg></button><button aria-label="Page Pan"><svg class="ic"><use href="#phand"/></svg></button><button aria-label="Whole Page"><svg class="ic"><use href="#pfit"/></svg></button><button aria-label="Zoom 100%"><svg class="ic"><use href="#p11"/></svg></button>
      <i class="sep"></i>
      <button aria-label="Page Fixed Zoom In"><svg class="ic"><use href="#pf"/></svg></button><button aria-label="Page Fixed Zoom Out"><svg class="ic"><use href="#pfo"/></svg></button>
      <i class="sep"></i>
      <button aria-label="Back"><svg class="ic"><use href="#pl"/></svg></button><button aria-label="Forward"><svg class="ic"><use href="#pr"/></svg></button>
      <span class="zoombox"><select class="combo" aria-label="Page zoom"><option>100%</option></select></span>
      <i class="sep"></i>
      <button class="on pale" aria-label="Draft Mode"><svg class="ic"><use href="#draft"/></svg></button><button aria-label="Focus Data Frame"><svg class="ic"><use href="#focus"/></svg></button><button aria-label="Change Layout"><svg class="ic"><use href="#chg"/></svg></button><button aria-label="Data Driven Pages"><svg class="ic"><use href="#ddp"/></svg></button>
      <button class="more" aria-label="Toolbar Options"></button>
    </div>
  </div>
  <footer class="status">557862.947&nbsp; 9560195.102 Meters</footer>
  <div class="watermark"><p>Activar Windows</p><p>Ve a Configuración para activar Windows.</p></div>
</div>

<div class="taskbar">
  <button class="start" aria-label="Inicio"><svg viewBox="0 0 16 16"><path d="M0 2l7-1v6.500H0zM8 1l8-1v7.500H8zM0 8.500h7V15l-7-1zM8 8.500h8V16l-8-1z" fill="#fff"/></svg></button>
  <label class="find"><svg viewBox="0 0 16 16"><circle cx="10" cy="6" r="5" fill="none" stroke="#333" stroke-width="1.300"/><path d="M6.500 9.500L1 15" stroke="#333" stroke-width="1.400"/></svg><input type="text" placeholder="Escribe aquí para buscar" aria-label="Escribe aquí para buscar"></label>
  <button class="sys" aria-label="Cortana"><svg viewBox="0 0 24 24"><circle cx="12" cy="12" r="6.500" fill="none" stroke="#eee" stroke-width="2.200"/></svg></button>
  <button class="sys" aria-label="Vista de tareas"><svg viewBox="0 0 24 24"><path d="M5.500 9.500h9v6h-9zM5 4v3h10V4M5 20v-2h10v2M18.500 4v16" fill="none" stroke="#eee" stroke-width="1.300"/><path d="M17 8h3v3h-3z" fill="#eee"/></svg></button>
  <button class="app" aria-label="Edge"><svg viewBox="0 0 24 24"><circle cx="12" cy="12" r="11" fill="url(#g-edge)"/><path d="M2 9Q5 1 12 1q9 1 11 9 0 5-5 6-5 0-4-4 0-4-5-5Q4 7 2 11z" fill="url(#g-edge2)"/><path d="M9 9q-4 4 0 9 5 5 11 1-7 2-9-3-1-4 3-5-2-3-5-2z" fill="#123f6d"/></svg></button>
  <button class="app run" aria-label="Explorador"><svg viewBox="0 0 24 24"><path d="M2 4h7l2 2h11v15H2z" fill="#e8b33d"/><path d="M2 8h20v13H2z" fill="#fbd866"/><path d="M5 21v-7h14v7h-4v-3H9v3z" fill="#4c9fd8"/></svg></button>
  <button class="app" aria-label="Microsoft Store"><svg viewBox="0 0 24 24"><path d="M8 7V2h8v5" fill="none" stroke="#eee" stroke-width="1.700"/><path d="M1 6h22v16H1z" fill="#f4f4f4"/><path d="M8 10h4v4H8z" fill="#e75a2c"/><path d="M13 10h4v4h-4z" fill="#7ab51d"/><path d="M8 15h4v4H8z" fill="#1b9ce2"/><path d="M13 15h4v4h-4z" fill="#f5b51b"/></svg></button>
  <button class="app run" aria-label="Chrome"><svg viewBox="0 0 24 24"><circle cx="12" cy="12" r="10.500" fill="#fbc72b"/><path d="M2.900 6.800A10.500 10.500 0 0 1 21.100 6.800H12z" fill="#e04334"/><path d="M2.900 6.800A10.500 10.500 0 0 0 11.500 22.500L16.500 14.600 12 12 7.500 14.600z" fill="#2fa04e"/><path d="M2.900 6.800L7.500 14.600 12 6.800z" fill="#e04334"/><circle cx="12" cy="12" r="5.200" fill="#fff"/><circle cx="12" cy="12" r="4" fill="#4285e8"/></svg></button>
  <button class="app" aria-label="Correo"><svg viewBox="0 0 24 24"><path d="M1 9l11-8 11 8z" fill="#1769aa"/><path d="M1 8h22v14H1z" fill="#2ca4e2"/><path d="M3 8h18l-9 8z" fill="#f4faff"/><path d="M1 22l11-9 11 9z" fill="#46b9ef"/></svg></button>
  <button class="app" aria-label="Civil 3D"><svg viewBox="0 0 24 24"><path d="M1 1h22v22H1z" fill="#e5f3f9"/><path d="M16.500 8V5.500Q8 1 7.500 10t9 5V12" fill="none" stroke="#247ca8" stroke-width="3"/><path d="M14 20h7" stroke="#247ca8" stroke-width="2" stroke-dasharray="2 .5"/></svg></button>
  <button class="app run" aria-label="PowerPoint"><svg viewBox="0 0 24 24"><circle cx="14" cy="12" r="10" fill="#d35230"/><path d="M14 2a10 10 0 0 1 10 10H14z" fill="#f08c6c"/><path d="M1 6h12v12H1z" fill="#b93a1e"/><text x="4" y="16" class="pp">P</text></svg></button>
  <button class="app run" aria-label="Acrobat"><svg viewBox="0 0 24 24"><rect x="2" y="2" width="20" height="20" rx="3" fill="#a90e12"/><path d="M6 18q5-3 6-12 1 8 7 8-7-1-13 4z" fill="none" stroke="#fff" stroke-width="1.700"/></svg></button>
  <button class="app run" aria-label="OBS"><svg viewBox="0 0 24 24"><circle cx="12" cy="12" r="10" fill="#222" stroke="#bbb" stroke-width="1.600"/><g fill="none" stroke="#bbb" stroke-width="2"><path d="M12 11Q7 9 9 4M13 12q5-4 7 1M11 13q1 6-5 6"/></g></svg></button>
  <button class="app run active" aria-label="ArcMap"><svg viewBox="0 0 16 16"><use href="#app"/></svg></button>
  <div class="tray">
    <svg viewBox="0 0 20 20" class="moon"><path d="M12 1q7 3 6 10-2 8-10 8-5 0-7-4 7 2 10-3t1-11z" fill="#fbcf3b"/></svg><span class="temp">20°C</span>
    <svg viewBox="0 0 16 16"><path d="M3 10l5-5 5 5" fill="none" stroke="#eee" stroke-width="1.400"/></svg>
    <svg viewBox="0 0 16 16"><path d="M5 6V1h6v5M4 6h8v9H4zM7 3v1M9 3v1M12 12l2 2" fill="none" stroke="#ddd" stroke-width="1.300"/></svg>
    <svg viewBox="0 0 16 16"><path d="M3 13q-4-1-2-4 1-2 3-2 2-5 6-3 2 1 3 4 4 1 2 5z" fill="#ddd"/></svg>
    <svg viewBox="0 0 16 16"><path d="M5 0h6v9H5z" fill="#eee"/><path d="M3 7q0 5 5 5t5-5M8 12v3M5 15h6" fill="none" stroke="#eee" stroke-width="1.300"/></svg>
    <svg viewBox="0 0 16 16"><path d="M1.500 4.500h12v7h-12zM14 6.500h1.500v3H14" fill="none" stroke="#eee" stroke-width="1.300"/><path d="M3 6h5v4H3zM1 2v3" fill="#eee"/></svg>
    <svg viewBox="0 0 16 16"><path d="M1 6h3l4-4v12l-4-4H1zM10 6q2 2 0 4M12 4q3 4 0 8M14 2q4 6 0 12" fill="none" stroke="#ddd" stroke-width="1.200"/></svg>
    <svg viewBox="0 0 16 16"><path d="M2 14Q2 3 14 2M5 14q0-8 9-9M8 14q0-5 6-6M11 14q0-3 3-3" fill="none" stroke="#aaa" stroke-width="1.400"/></svg>
    <span class="lang">ESP</span>
    <span class="clock">23:06<br>28/09/2021</span>
    <svg viewBox="0 0 16 16"><path d="M1 2h14v10h-4l-3 3v-3H1z" fill="none" stroke="#eee" stroke-width="1.200"/></svg>
  </div>
</div>
<script src="map.js"></script>
</body>
</html>
```

FILE: map.js
```js
// Cloud positions: x, y, radius, in thirds of a map unit.
const north = [[480,255,17],[495,280,15],[500,310,16],[500,345,13],[455,270,7],[468,240,6],[440,320,6],[545,345,11],[575,355,14],[580,382,12],[615,365,9],[560,405,9],[600,420,10],[640,430,9],[650,455,10],[590,455,9],[470,430,12],[450,460,8],[500,490,9],[545,505,10],[575,490,12],[490,525,8],[470,550,4],[600,480,8],[650,478,6],[535,395,8],[615,450,8],[725,330,8],[745,352,11],[762,385,12],[775,410,10],[795,440,11],[790,465,10],[745,485,18],[775,482,9],[720,405,4],[860,430,10],[885,435,8],[835,395,5],[850,455,7],[940,280,10],[957,310,7],[948,355,6],[965,365,6],[1018,255,12],[1035,265,8],[998,385,9],[1022,388,8],[970,415,6],[1045,448,13],[1067,458,9],[1045,480,9],[1022,472,7],[330,580,12],[345,605,11],[352,625,7],[290,570,5],[410,490,7],[385,470,5],[208,380,6],[195,525,5],[180,545,5],[675,255,4],[735,300,4],[620,295,4],[260,640,8],[265,675,6],[215,675,7],[205,650,5],[207,715,10],[195,748,10],[225,745,5],[150,720,5],[320,640,5],[240,610,4],[415,410,5],[435,435,5],[870,305,4],[905,345,4],[935,375,6],[160,785,5],[125,775,5],[100,818,7],[135,850,6],[45,825,7],[20,805,4],[140,815,4]];
const south = [[525,130,8],[580,125,6],[620,160,7],[595,165,4],[465,175,7],[415,185,5],[350,245,8],[405,248,6],[500,285,11],[480,280,5],[595,255,11],[625,230,5],[560,265,4],[420,320,12],[450,310,7],[500,320,9],[545,345,13],[550,368,8],[300,355,9],[345,375,9],[298,395,16],[328,400,10],[375,415,9],[405,410,12],[390,460,13],[430,460,13],[410,438,9],[465,395,9],[515,400,7],[475,440,8],[340,480,9],[440,490,8],[395,530,9],[425,515,7],[380,365,9],[310,300,6],[370,290,6],[390,290,5],[160,425,6],[205,428,4],[230,425,4],[270,405,4],[640,485,8],[605,520,7],[635,525,7],[655,518,5],[665,455,3],[540,560,4],[385,600,12],[410,607,7],[395,635,15],[405,655,10],[425,690,8],[440,712,5],[440,275,5],[380,510,6]];
let seed = 5;
const rand = () => (seed = (seed * 16807) % 2147483647) / 2147483647;
const layer = document.getElementById("clouds");
const all = north.concat(south.map(([x, y, r]) => [x - 480, y + 690, r])).map(([x, y, r]) => [x, y, r * 1.2]);
const blob = (x, y, rx, ry, fill) => {
  const e = document.createElementNS("http://www.w3.org/2000/svg", "ellipse");
  const attrs = { cx: 600 + x / 3, cy: 140 + y / 3, rx: rx / 3, ry: ry / 3, fill };
  for (const k in attrs) e.setAttribute(k, attrs[k]);
  layer.append(e);
};
// Every cloud throws a shadow to the west; the larger ones break into smaller puffs.
for (const [x, y, r] of all) {
  blob(x - r * 0.8, y + 2, r * 0.7 + 3, r * 0.75 + 3, "#0a0a0a");
  blob(x + 2, y, r * 0.85, r * 0.8, "#fff");
  if (r > 9) {
    for (let i = 0; i < 4; i++) {
      const px = x + (rand() - 0.45) * 3.4 * r;
      const py = y + (rand() - 0.5) * 3.2 * r;
      blob(px - 6, py + 2, r * 0.35 + 2, r * 0.35 + 1, "#121212");
      blob(px + 2, py, r * 0.38, r * 0.36, "#fafafa");
    }
  }
}
```

FILE: styles.css
```css
* { box-sizing: border-box; }
body { margin: 0; height: 100vh; display: flex; flex-direction: column; background: #000; font: 11px/14px "Open Sans", "Noto Sans", sans-serif; color: #222; overflow: hidden; }
button { border: 0; padding: 0; margin: 0; background: none; font: inherit; color: inherit; display: flex; align-items: center; justify-content: center; }
h1, h2, p { margin: 0; font-weight: normal; font-size: inherit; }
.defs { position: absolute; width: 0; height: 0; }
.ic { width: 16px; height: 16px; flex: none; display: block; }
.ic.sm { width: 14px; height: 14px; }

.window { flex: 1; min-height: 0; margin: 0 1px; display: flex; flex-direction: column; background: #f8f8f8; position: relative; }
.titlebar { height: 21px; display: flex; align-items: center; gap: 4px; padding-left: 2px; background: #fff; }
.titlebar h1 { font-size: 11px; flex: 1; }
.winctl { display: flex; align-self: stretch; }
.winctl button { width: 43px; height: 20px; }
.winctl .hot { background: #e5e5e5; }
.winctl svg { width: 12px; height: 12px; }
.menu { height: 25px; display: flex; align-items: center; padding-left: 4px; background: linear-gradient(90deg, #f1f1f1, #fafafa 60%); }
.menu button { padding: 0 7px; }

.row { height: 24px; display: flex; gap: 2px; padding-left: 1px; }
.tb { height: 24px; display: flex; align-items: center; background: linear-gradient(#fdfdfd, #f3f3f3); }
.tb.end { margin-left: auto; margin-right: 4px; }
.tb > button, .pair > button { width: 20px; height: 21px; flex: none; }
.grip { width: 9px; height: 14px; flex: none; background: radial-gradient(circle, #aaa 1px, transparent 1px) 2px 0 / 4px 4px repeat-y; }
.sep { width: 7px; height: 15px; flex: none; background: linear-gradient(#ccc, #ccc) center / 1px 100% no-repeat; }
.dd { width: 10px; height: 4px; flex: none; background: #222; clip-path: polygon(2px 0, 8px 0, 5px 4px); }
.dd.off { background: #aaa; }
.tb > .txt { width: auto; padding: 0 0 0 4px; font-size: 11px; }
.tb.end > button:not(.txt, .more) { width: 21px; }
.tb .on, .toctools .on { background: #d5eafa; border: 1px solid #6aaadc; }
.tb .on.pale { background: #e6eef2; border-color: #b4c6cf; }
.tb > .more { width: 10px; height: 23px; margin-left: 2px; background: linear-gradient(#222, #222) 50% 17px / 6px 1px no-repeat, conic-gradient(from 315deg at 50% 100%, #222 90deg, transparent 0) 50% 19px / 6px 3px no-repeat, linear-gradient(#f4f4f4, #c4c4c4 60%, #b4b4b4); }
.serif { font: bold 14px/16px "Liberation Serif", serif; }
.serif.it { font-style: italic; }
.serif.un { text-decoration: underline; }
.pair { display: flex; align-items: center; justify-content: space-between; width: 36px; flex: none; }
.pair .colour { width: 16px; height: 18px; border-bottom: 3px solid #111; margin-left: 2px; }
.combo { appearance: none; height: 20px; width: 100%; flex: none; border: 1px solid #a8a8a8; border-radius: 0; padding: 0 18px 0 2px; font: 11px/14px "Open Sans", sans-serif; color: #333; background: #fff url("data:image/svg+xml,%3Csvg xmlns='http://www.w3.org/2000/svg' width='10' height='8'%3E%3Cpath d='M1 2l4 4 4-4' fill='none' stroke='%23666'/%3E%3C/svg%3E") no-repeat right 2px center; }
.combo.scale { width: 138px; }
.combo.size { width: 42px; margin: 0 1px; }
.combo.layer { width: 166px; background-color: #cbcbcb; border-color: #cbcbcb; opacity: 1; }
.fontbox { position: relative; width: 160px; }
.fontbox .ic { position: absolute; left: 2px; top: 2px; }
.fontbox .combo { padding-left: 18px; display: block; }
.angle { width: 69px; height: 17px; border: 1px solid #888; background: #fff; margin: 0 4px 0 2px; padding: 0 2px; font: inherit; }

.work { flex: 1; min-height: 0; display: flex; padding-top: 1px; }
.toc { width: 309px; flex: none; display: flex; flex-direction: column; border-right: 1px solid #bbb; }
.tochead { height: 17px; display: flex; align-items: center; gap: 5px; padding: 0 3px 0 4px; background: #cedae7; }
.tochead h2 { flex: 1; }
.tochead button { width: 10px; height: 14px; }
.tochead svg { width: 10px; height: 10px; }
.toctools { height: 25px; display: flex; align-items: center; padding-left: 4px; background: linear-gradient(#fcfcfc, #f2f2f2); }
.toctools button { width: 20px; height: 20px; margin-right: 1px; }
.tree { flex: 1; background: #fff; border: solid #999; border-width: 1px 0; padding-top: 1px; }
.node { height: 17px; display: flex; align-items: center; gap: 7px; }
.node.top { padding-left: 8px; gap: 5px; }
.node.sub { padding-left: 26px; }
.node.sym { padding-left: 55px; }
.picked { background: #0b78d0; color: #fff; padding: 0 1px; line-height: 16px; margin-left: -3px; }
.exp { width: 9px; height: 9px; flex: none; border: 1px solid #aaa; background: linear-gradient(#555, #555) center / 5px 1px no-repeat #fff; }
.node input { appearance: none; width: 11px; height: 11px; margin: 0; border: 1px solid #222; background: #fff; display: grid; place-items: center; }
.node input:checked::after { content: ""; width: 6px; height: 3px; border: solid #111; border-width: 0 0 2px 2px; transform: rotate(-45deg); margin-top: -2px; }
.swatch { width: 16px; height: 12px; border: 2px solid #b80d18; border-radius: 2px; }
.legend { display: grid; grid-template: 16px 32px 16px / 18px auto; justify-content: start; padding-left: 55px; margin-bottom: 37px; }
.legend p { grid-column: 2; padding-left: 4px; }
.legend .ramp { grid-column: 1; grid-row: 2 / 4; width: 13px; height: 34px; margin-top: 1px; background: linear-gradient(#fafafa, #888 50%, #000 95%); }

.mapframe { flex: 1; min-width: 0; margin-left: 5px; display: grid; grid-template: minmax(0, 1fr) 16px / minmax(0, 1fr) 16px; border: solid #666; border-width: 1px 0 0 1px; background: #eee; }
.map { background: #fff; min-height: 0; }
.map svg { display: block; width: 100%; height: 100%; }
.vbar { display: flex; flex-direction: column; padding: 0 2px; background: #f0f0f0; }
.vbar button { height: 16px; flex: none; }
.vbar svg, .hbar svg { width: 10px; height: 10px; }
.thumb { flex: 1; background: #cbcbcb; }
.vbar .thumb { margin-bottom: 21px; }
.hbar { grid-column: 1 / 3; display: flex; align-items: center; padding-right: 16px; background: #f0f0f0; }
.hbar .thumb { height: 12px; }
.hbar button { width: 16px; height: 15px; }
.hbar .onb { background: #bfe0f5; }

.dock { width: 19px; margin-left: 3px; display: flex; flex-direction: column; align-items: stretch; padding-top: 1px; flex: none; }
.dock button { flex-direction: column; gap: 3px; padding: 2px 0; border: 1px solid #aaa; border-right: 0; border-radius: 4px 0 0 4px; background: #f1f1f1; color: #555; }
.dock span { writing-mode: vertical-rl; font: 12px/15px "Liberation Sans", sans-serif; }
.dock .ic { width: 15px; height: 15px; }
.dock .gap { margin-bottom: 13px; }

.layoutbar { height: 26px; flex: none; padding-left: 197px; background: #f8f8f8; }
.layoutbar .tb { width: max-content; height: 25px; }
.zoombox { width: 56px; padding-left: 1px; }
.zoombox .combo { display: block; font-size: 10px; border-color: #ccc; color: #0f4f86; background-image: linear-gradient(#1d74b8, #1d74b8), url("data:image/svg+xml,%3Csvg xmlns='http://www.w3.org/2000/svg' width='10' height='8'%3E%3Cpath d='M1 2l4 4 4-4' fill='none' stroke='%23999'/%3E%3C/svg%3E"); background-size: 26px 13px, auto; background-position: 2px center, right 3px center; }
.status { height: 19px; flex: none; display: flex; align-items: center; justify-content: flex-end; padding-right: 82px; background: #efefef; font-size: 10px; }
.watermark { position: absolute; right: 54px; bottom: 33px; color: rgba(145, 145, 145, .65); font-size: 13px; line-height: 18px; pointer-events: none; }
.watermark p:first-child { font-size: 18px; line-height: 24px; }

.taskbar { height: 37px; flex: none; display: flex; align-items: stretch; background: #1e1e1e; color: #eee; }
.start { width: 46px; }
.start svg { width: 16px; height: 16px; }
.find { width: 322px; display: flex; align-items: center; gap: 10px; padding-left: 11px; background: #f1f1f1; border-bottom: 1px solid #bbb; }
.find svg { width: 16px; height: 16px; flex: none; }
.find input { border: 0; background: none; outline: 0; flex: 1; padding: 0; font: 13px/18px "Open Sans", sans-serif; }
.find input::placeholder { color: #555; opacity: 1; }
.sys { width: 46px; }
.sys svg, .app svg { width: 24px; height: 24px; }
.app { width: 42px; }
.app.run { background: linear-gradient(#76b9ed, #76b9ed) center bottom / 34px 2px no-repeat; }
.app.active { background-color: #4a4a4a; background-size: 42px 2px; }
.pp { font: bold 11px "Liberation Sans", sans-serif; fill: #fff; }
.tray { margin-left: auto; display: flex; align-items: center; gap: 6px; padding-right: 24px; }
.tray svg { width: 16px; height: 16px; flex: none; }
.tray .moon { width: 20px; height: 20px; }
.temp { font-size: 13px; margin: 0 8px 0 3px; }
.lang { margin: 0 10px 0 8px; font-size: 10px; }
.clock { text-align: center; font-size: 10px; line-height: 16px; margin-right: 10px; }
```
